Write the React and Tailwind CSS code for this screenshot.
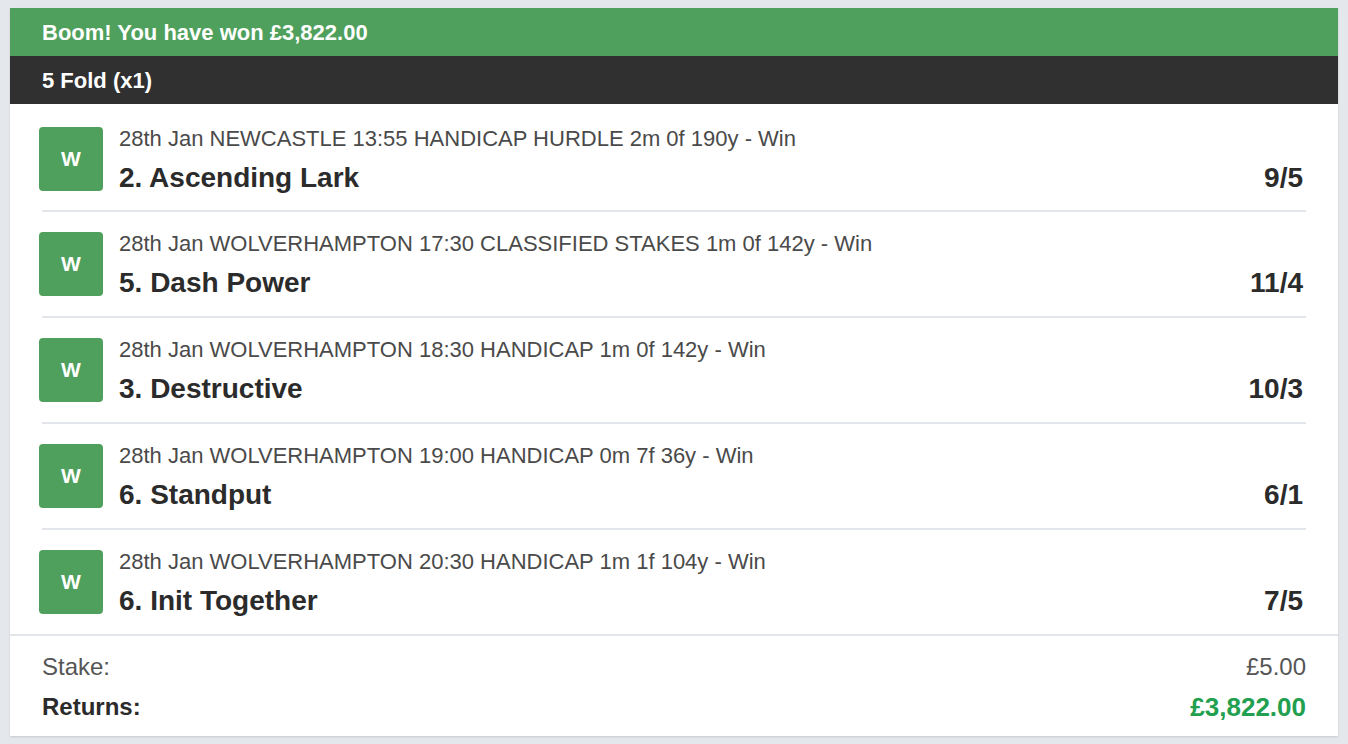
const legs = [
  {
    race: "28th Jan NEWCASTLE 13:55 HANDICAP HURDLE 2m 0f 190y - Win",
    runner: "2. Ascending Lark",
    odds: "9/5",
  },
  {
    race: "28th Jan WOLVERHAMPTON 17:30 CLASSIFIED STAKES 1m 0f 142y - Win",
    runner: "5. Dash Power",
    odds: "11/4",
  },
  {
    race: "28th Jan WOLVERHAMPTON 18:30 HANDICAP 1m 0f 142y - Win",
    runner: "3. Destructive",
    odds: "10/3",
  },
  {
    race: "28th Jan WOLVERHAMPTON 19:00 HANDICAP 0m 7f 36y - Win",
    runner: "6. Standput",
    odds: "6/1",
  },
  {
    race: "28th Jan WOLVERHAMPTON 20:30 HANDICAP 1m 1f 104y - Win",
    runner: "6. Init Together",
    odds: "7/5",
  },
];

function Leg({ leg, first }) {
  return (
    <div
      className={
        first
          ? "flex items-start pb-[19px] pl-[29px] pr-[35px] pt-5"
          : "flex items-start py-5 pl-[29px] pr-[35px]"
      }
    >
      <div className="flex h-16 w-16 shrink-0 items-center justify-center rounded bg-[#4ea05c] text-[21px] font-bold text-white">
        W
      </div>
      <div className="ml-4 flex h-16 flex-1 flex-col justify-between">
        <div className="text-[22px] leading-6 text-[#4a4a4a]">{leg.race}</div>
        <div className="text-[28px] font-bold leading-[26px] text-[#2b2b2b]">
          {leg.runner}
        </div>
      </div>
      <div className="flex h-16 items-end text-[28px] font-bold leading-[26px] text-[#2b2b2b]">
        {leg.odds}
      </div>
    </div>
  );
}

export default function App() {
  return (
    <div
      className="min-h-screen bg-[#e4e7eb] px-[10px] pt-2"
      style={{ fontFamily: '"Liberation Sans", Arial, sans-serif' }}
    >
      <div className="bg-white shadow-[0_1px_2px_rgba(0,0,0,0.12)]">
        {/* Win banner */}
        <div className="flex h-12 items-center bg-[#4ea05c] px-8 text-[22px] font-bold text-white">
          Boom! You have won £3,822.00
        </div>
        <div className="flex h-12 items-center bg-[#303030] px-8 text-[22px] font-bold text-white">
          5 Fold (x1)
        </div>

        {/* Legs */}
        <div className="pt-[3px]">
          {legs.map((leg, i) => (
            <div key={i}>
              <Leg leg={leg} first={i === 0} />
              {i < legs.length - 1 && <div className="mx-8 h-[2px] bg-[#e2e5e9]" />}
            </div>
          ))}
        </div>

        {/* Totals */}
        <div className="border-t-2 border-[#e2e5e9] px-8 pb-[9px] pt-[11px] text-[24px] leading-10">
          <div className="flex justify-between text-[#555]">
            <span>Stake:</span>
            <span>£5.00</span>
          </div>
          <div className="flex justify-between font-bold">
            <span className="text-[#2b2b2b]">Returns:</span>
            <span className="text-[26px] text-[#22a04f]">£3,822.00</span>
          </div>
        </div>
      </div>
    </div>
  );
}
